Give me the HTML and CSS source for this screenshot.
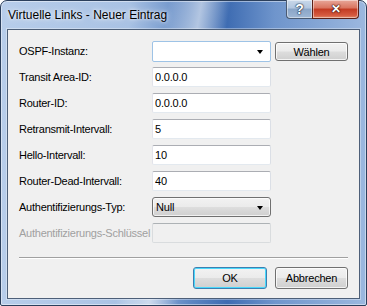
FILE: index.html
```html
<!DOCTYPE html>
<html>
<head>
    <link rel="stylesheet" href="styles.css">
</head>
<body>
    <div class="window">
        <div class="titlebar">
            <span class="title">Virtuelle Links - Neuer Eintrag</span>
            <div class="caption-buttons">
                <span class="cap-btn help">?</span>
                <span class="cap-btn close">&#x2715;</span>
            </div>
        </div>

        <div class="client">
            <div class="form">
                <label>OSPF-Instanz:</label>
                <div class="combo edit"><span class="arrow"></span></div>
                <button class="btn small">Wählen</button>

                <label>Transit Area-ID:</label>
                <input type="text" value="0.0.0.0">
                <span></span>

                <label>Router-ID:</label>
                <input type="text" value="0.0.0.0">
                <span></span>

                <label>Retransmit-Intervall:</label>
                <input type="text" value="5">
                <span></span>

                <label>Hello-Intervall:</label>
                <input type="text" value="10">
                <span></span>

                <label>Router-Dead-Intervall:</label>
                <input type="text" value="40">
                <span></span>

                <label>Authentifizierungs-Typ:</label>
                <div class="combo list">Null<span class="arrow"></span></div>
                <span></span>

                <label class="disabled">Authentifizierungs-Schlüssel</label>
                <input type="text" value="" disabled>
                <span></span>
            </div>

            <div class="separator"></div>

            <div class="actions">
                <button class="btn default">OK</button>
                <button class="btn">Abbrechen</button>
            </div>
        </div>
    </div>
</body>
</html>
```

FILE: styles.css
```css
html, body {
    margin: 0;
    padding: 0;
    background: #ffffff;
}

.window {
    width: 367px;
    height: 306px;
    box-sizing: border-box;
    padding: 0 6px 6px 6px;
    border: 1px solid #2b3f5c;
    border-radius: 7px 7px 2px 2px;
    background:
        linear-gradient(100deg, rgba(255,255,255,0) 0%, rgba(255,255,255,0) 40%, rgba(255,255,255,0.55) 48%, rgba(255,255,255,0) 55%, rgba(255,255,255,0) 100%),
        linear-gradient(90deg, #b7cdea 0%, #a9c2e4 35%, #5d86c2 52%, #3e6cb2 62%, #6f95cc 75%, #9cb8df 100%);
    box-shadow: inset 0 0 0 1px rgba(255,255,255,0.45);
    font-family: "Liberation Sans", Arial, sans-serif;
}

.titlebar {
    height: 28px;
    display: flex;
    align-items: flex-start;
    margin: 0 1px 0 1px;
}

.title {
    flex: 1;
    margin-top: 7px;
    font-size: 12px;
    line-height: 15px;
    color: #000000;
    text-shadow: 0 0 6px rgba(255,255,255,0.9), 0 0 3px rgba(255,255,255,0.8);
}

.caption-buttons {
    display: flex;
    margin-top: -1px;
}

.cap-btn {
    height: 18px;
    display: flex;
    align-items: center;
    justify-content: center;
    color: #ffffff;
    font-weight: bold;
    border: 1px solid #4a5a72;
    border-top: none;
    box-shadow: inset 0 0 0 1px rgba(255,255,255,0.45);
}

.help {
    width: 25px;
    font-size: 14px;
    border-radius: 0 0 0 4px;
    border-right: none;
    background: linear-gradient(#c9d8ea 0%, #b2c6df 45%, #8aa5c7 50%, #9fb7d5 100%);
    text-shadow: 0 0 1px #1f2f48, 0 0 1px #1f2f48, 0 0 2px #1f2f48;
}

.close {
    width: 45px;
    font-size: 12px;
    border-color: #5b2118;
    border-radius: 0 0 4px 0;
    background: linear-gradient(#e8a89a 0%, #d9735e 45%, #c23a22 50%, #d55a3f 85%, #e08a6a 100%);
    text-shadow: 0 0 1px #3a1008, 0 0 1px #3a1008, 0 0 2px #3a1008;
}

.client {
    height: 270px;
    box-sizing: border-box;
    background-color: #f0f0f0;
    border: 1px solid #4d5f78;
    padding: 11px 11px 0 11px;
    box-shadow: 0 0 0 1px rgba(255,255,255,0.35);
}

.form {
    display: grid;
    grid-template-columns: 129px 119px 73px;
    column-gap: 4px;
    grid-auto-rows: 20px;
    row-gap: 6px;
}

label {
    display: flex;
    align-items: center;
    font-size: 11px;
    letter-spacing: -0.25px;
    color: #000000;
    white-space: nowrap;
}

label.disabled {
    color: #a0a0a0;
}

input[type="text"] {
    width: 119px;
    height: 20px;
    box-sizing: border-box;
    margin: 0;
    padding: 0 2px;
    font-family: "Liberation Sans", Arial, sans-serif;
    font-size: 11px;
    letter-spacing: -0.2px;
    color: #000000;
    background: #ffffff;
    border: 1px solid;
    border-color: #abadb3 #dbdfe6 #e3e9ef #e2e3ea;
    border-radius: 2px;
    outline: none;
}

input[type="text"]:disabled {
    background: #f0f0f0;
    border-color: #adb2b5 #d9dcde #d9dcde #d9dcde;
}

.combo {
    position: relative;
    box-sizing: border-box;
    height: 20px;
    font-size: 11px;
    letter-spacing: -0.2px;
    display: flex;
    align-items: center;
    padding-left: 3px;
}

.combo.edit {
    height: 21px;
    background: #ffffff;
    border: 1px solid #9ec3e6;
    border-radius: 2px;
}

.combo.list {
    background: linear-gradient(#f2f2f2 0%, #ebebeb 48%, #dddddd 52%, #cfcfcf 100%);
    border: 1px solid #707070;
    border-radius: 3px;
    box-shadow: inset 0 0 0 1px rgba(255,255,255,0.7);
}

.arrow {
    position: absolute;
    right: 7px;
    top: 8px;
    width: 0;
    height: 0;
    border-left: 3.5px solid transparent;
    border-right: 3.5px solid transparent;
    border-top: 4px solid #000000;
}

.btn {
    box-sizing: border-box;
    width: 73px;
    height: 22px;
    margin: 0;
    padding: 0;
    font-family: "Liberation Sans", Arial, sans-serif;
    font-size: 11px;
    letter-spacing: -0.2px;
    color: #000000;
    background: linear-gradient(#f2f2f2 0%, #ebebeb 48%, #dddddd 52%, #cfcfcf 100%);
    border: 1px solid #707070;
    border-radius: 3px;
    box-shadow: inset 0 0 0 1px rgba(255,255,255,0.75);
}

.btn.small {
    height: 19px;
    margin-top: 1px;
}

.btn.default {
    width: 74px;
    border-color: #3c7fb1;
    background: linear-gradient(#f2f2f2 0%, #ebebeb 48%, #dddddd 52%, #cfcfcf 100%);
    box-shadow: inset 0 0 0 1px #4ad8fb;
}

.separator {
    margin-top: 14px;
    height: 0;
    border-top: 1px solid #a0a0a0;
    border-bottom: 1px solid #ffffff;
}

.actions {
    display: flex;
    justify-content: flex-end;
    gap: 8px;
    margin-top: 8px;
}
```
